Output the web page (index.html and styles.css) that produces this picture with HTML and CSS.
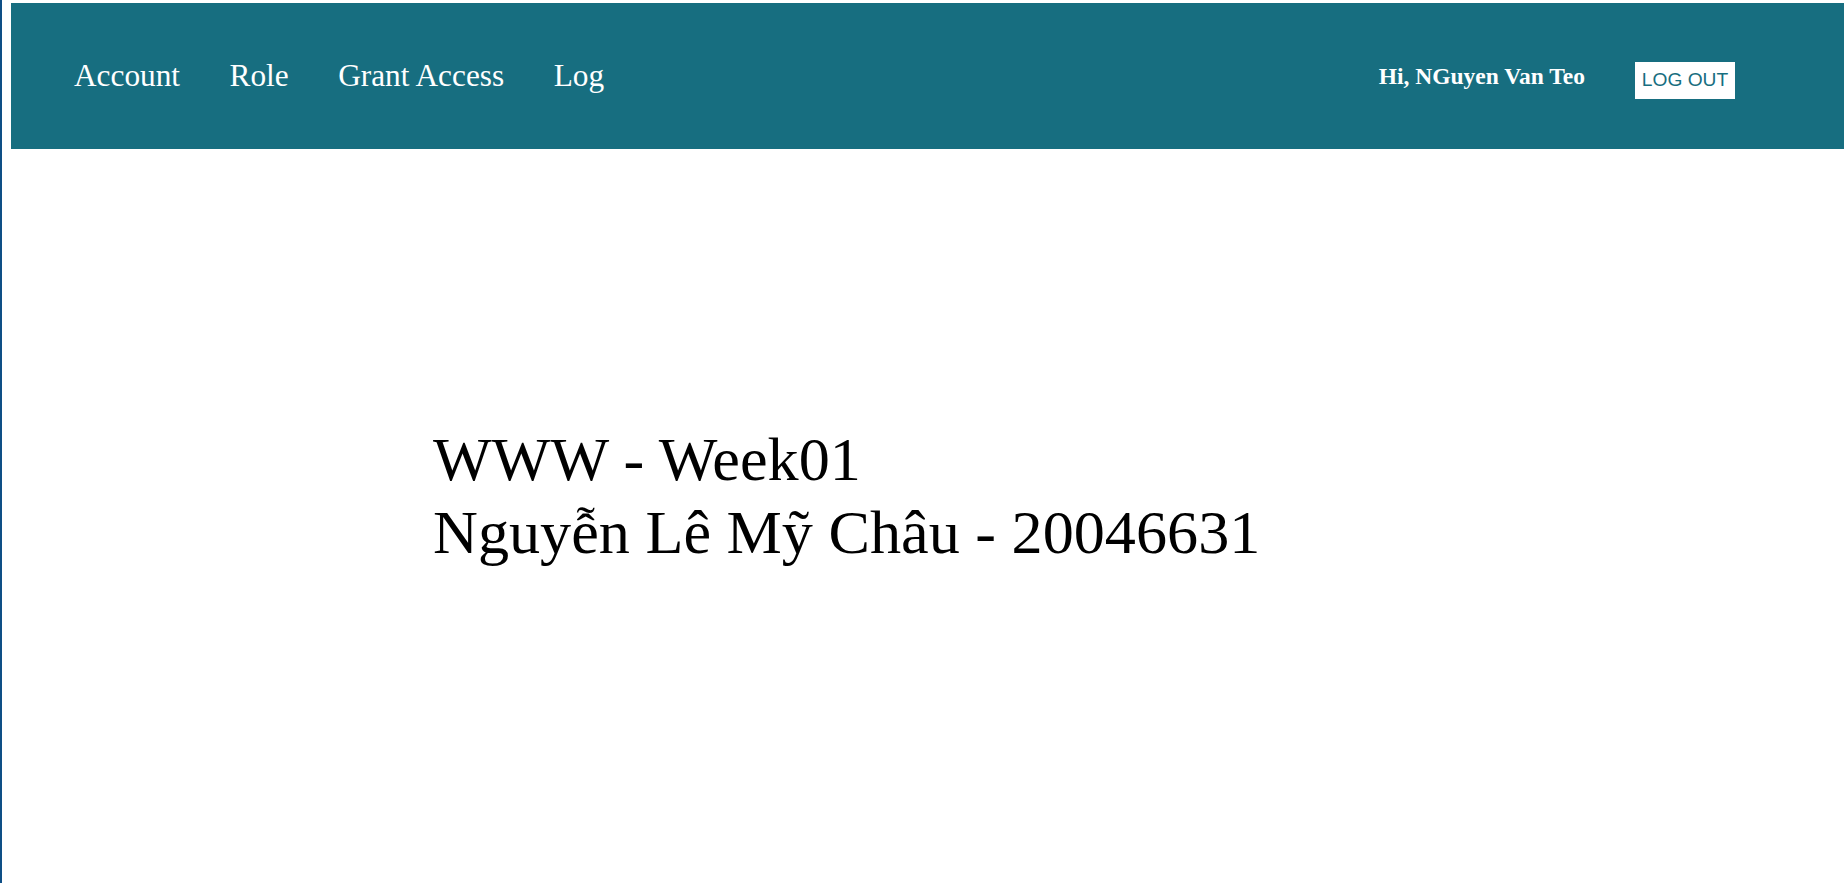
FILE: index.html
```html
<!DOCTYPE html>
<html lang="vi">
<head>
<meta charset="utf-8">
<title>WWW - Week01</title>
<link rel="stylesheet" href="styles.css">
</head>
<body>
<div class="page">
  <header class="topbar">
    <nav class="nav">
      <a class="nav-link" href="#">Account</a>
      <a class="nav-link" href="#">Role</a>
      <a class="nav-link" href="#">Grant Access</a>
      <a class="nav-link" href="#">Log</a>
    </nav>
    <div class="user">
      <span class="greeting">Hi, NGuyen Van Teo</span>
      <button class="logout" type="button">LOG OUT</button>
    </div>
  </header>
  <main class="content">
    <h1 class="title">WWW - Week01<br>Nguyễn Lê Mỹ Châu - 20046631</h1>
  </main>
</div>
</body>
</html>
```

FILE: styles.css
```css
html, body {
  margin: 0;
  padding: 0;
  height: 100%;
  background: #ffffff;
}

body {
  border-left: 2px solid #0e4f86;
  box-sizing: border-box;
  font-family: "Liberation Serif", "Times New Roman", serif;
  overflow: hidden;
}

.page {
  padding: 3px 0 0 9px;
}

.topbar {
  height: 146px;
  background: #176e80;
  display: flex;
  align-items: center;
  justify-content: space-between;
  padding: 0 109px 0 63px;
}

.nav {
  display: flex;
  align-items: center;
  gap: 49.5px;
}

.nav-link {
  color: #ffffff;
  text-decoration: none;
  font-size: 31.3px;
  line-height: 1;
}

.user {
  display: flex;
  align-items: center;
  gap: 50px;
}

.greeting {
  color: #ffffff;
  font-weight: bold;
  font-size: 23.5px;
}

.logout {
  width: 100px;
  height: 37px;
  margin-top: 8px;
  background: #ffffff;
  color: #176e80;
  border: none;
  padding: 0;
  font-family: "Liberation Sans", Arial, sans-serif;
  font-size: 19.2px;
}

.content {
  padding: 274px 0 0 422px;
}

.title {
  margin: 0;
  font-weight: normal;
  font-size: 62.2px;
  line-height: 73px;
  color: #000000;
}
```
